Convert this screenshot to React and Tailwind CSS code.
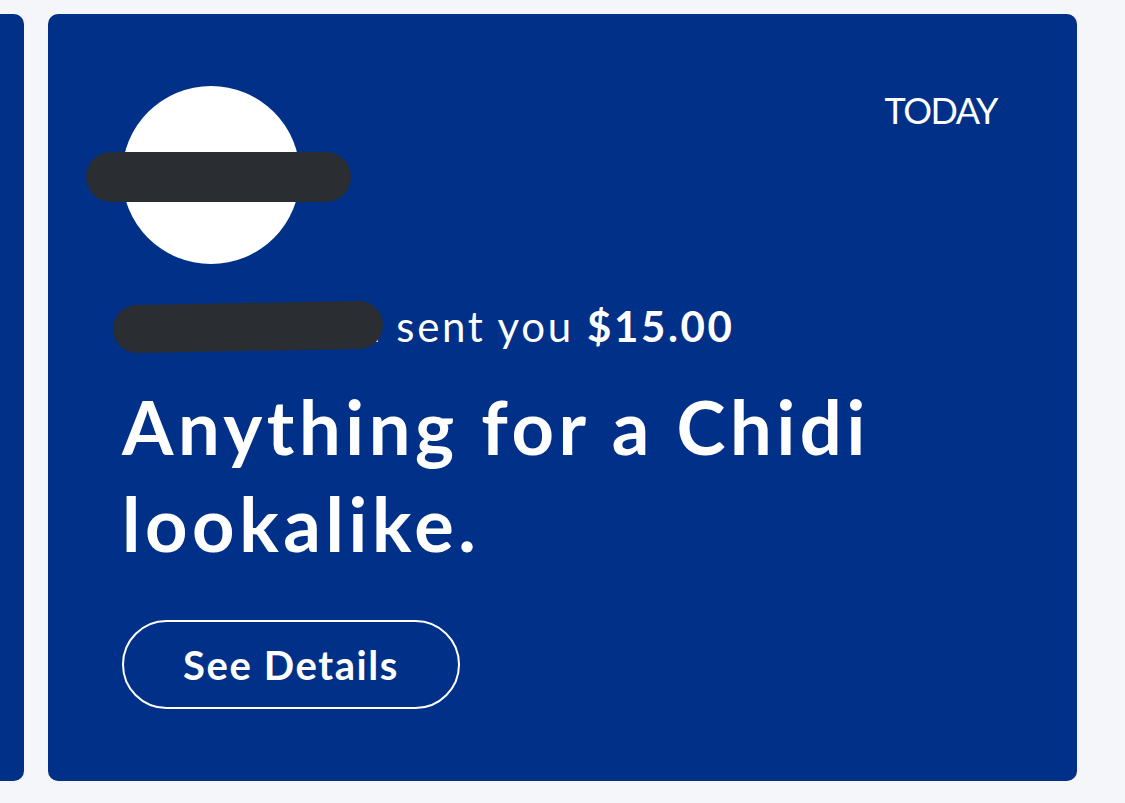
export default function App() {
  return (
    <div className="h-[803px] w-full bg-[#f5f6fa] flex gap-[24px] pt-[14px] pb-[22px] overflow-hidden" style={{ fontFamily: "Lato, 'Noto Sans', sans-serif" }}>
      <div className="w-[24px] shrink-0 bg-[#003087] rounded-r-[10px]" />
      <div className="relative w-[1029px] shrink-0 bg-[#003087] rounded-[10px] pl-[74px] pr-[80px] pt-[72px] text-white">
        <div className="flex justify-between items-start">
          <div className="relative w-[178px] h-[178px]">
            <div className="w-[178px] h-[178px] rounded-full bg-white" />
            <div className="absolute left-[-36px] top-[66px] w-[265px] h-[50px] rounded-full bg-[#2a2e33]" />
          </div>
          <div className="mt-[6px] text-[36px] leading-[36px] tracking-[-1.5px]">TODAY</div>
        </div>
        <div className="relative mt-[38px] text-[42px] leading-[48px] tracking-[2.6px] whitespace-nowrap">
          <span className="inline-block w-[261px] text-right">d</span>
          <span> sent you </span>
          <span className="font-bold">$15.00</span>
          <div className="absolute left-[-9px] top-[1px] w-[270px] h-[48px] rounded-full bg-[#2a2e33] -rotate-1" />
        </div>
        <h1 className="mt-[28px] text-[74px] leading-[97px] font-bold tracking-[4.6px]">
          Anything for a Chidi
          <br />
          lookalike.
        </h1>
        <button className="mt-[48px] w-[338px] h-[89px] rounded-full border-2 border-white text-[40px] font-bold text-white tracking-[1.6px] flex items-center justify-center">
          See Details
        </button>
      </div>
    </div>
  );
}
